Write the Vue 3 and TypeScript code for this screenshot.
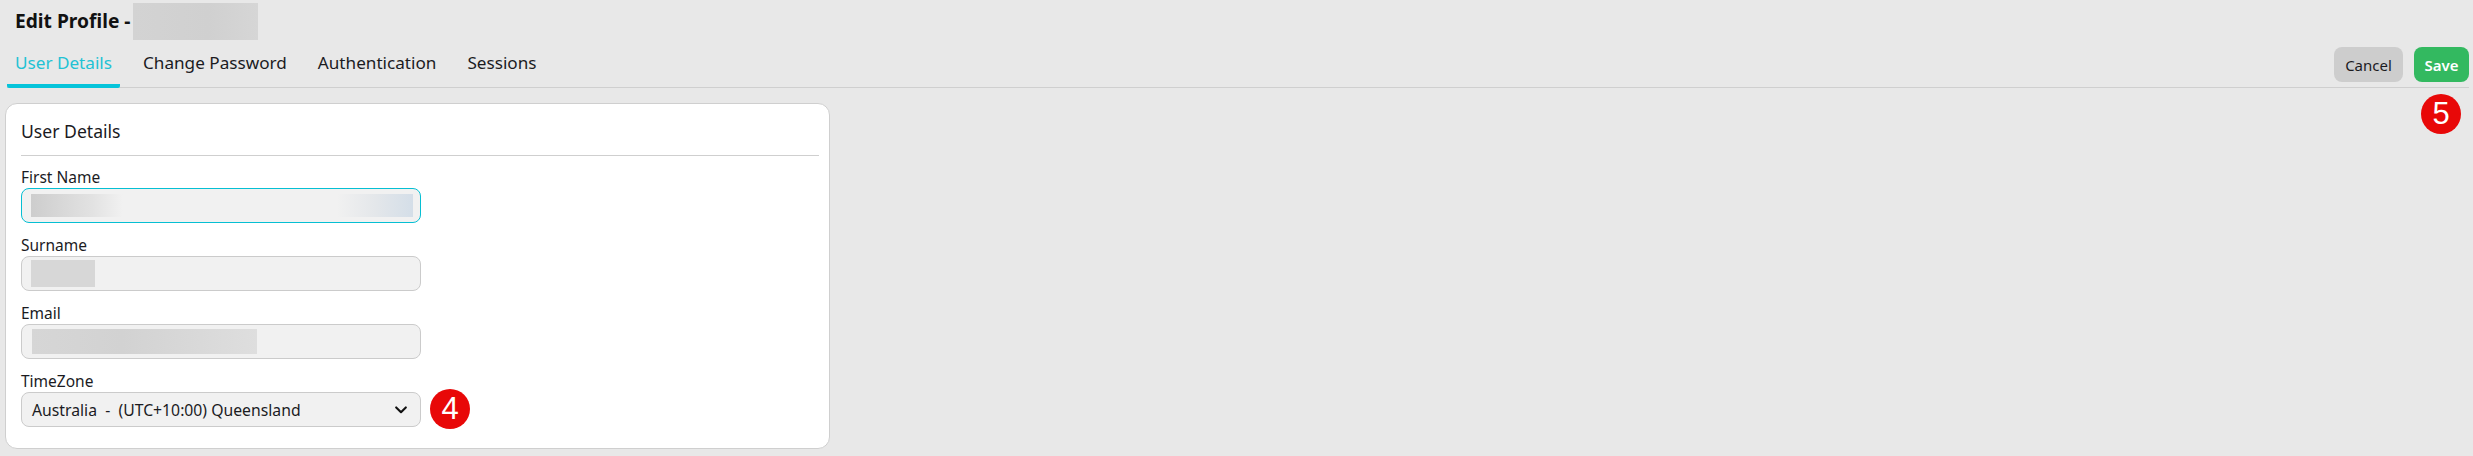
<script setup lang="ts">
const tabs = ['User Details', 'Change Password', 'Authentication', 'Sessions']
const activeTab = 'User Details'
</script>

<template>
  <div class="page">
    <div class="title-row">
      <h1 class="title">Edit Profile -</h1>
      <div class="title-blur" />
    </div>

    <div class="tab-row">
      <div class="tabs">
        <span
          v-for="tab in tabs"
          :key="tab"
          class="tab"
          :class="{ active: tab === activeTab }"
        >{{ tab }}</span>
      </div>
      <div class="actions">
        <button class="btn btn-cancel">Cancel</button>
        <button class="btn btn-save">Save</button>
        <span class="badge badge-save">5</span>
      </div>
    </div>

    <section class="card">
      <h2 class="card-title">User Details</h2>

      <label class="field-label">First Name</label>
      <div class="input focused">
        <div class="blur blur-first" />
      </div>

      <label class="field-label">Surname</label>
      <div class="input">
        <div class="blur blur-surname" />
      </div>

      <label class="field-label">Email</label>
      <div class="input">
        <div class="blur blur-email" />
      </div>

      <label class="field-label">TimeZone</label>
      <div class="input select">
        <span>Australia &nbsp;-&nbsp; (UTC+10:00) Queensland</span>
        <svg class="chevron" viewBox="0 0 12 8" fill="none" xmlns="http://www.w3.org/2000/svg">
          <path d="M1.2 1.4 6 6.2l4.8-4.8" stroke="#111" stroke-width="2.1" stroke-linecap="round" stroke-linejoin="round" />
        </svg>
        <span class="badge badge-zone">4</span>
      </div>
    </section>
  </div>
</template>

<style>
html,
body {
  margin: 0;
  background: #e8e8e8;
}
</style>

<style scoped>
.page {
  height: 456px;
  box-sizing: border-box;
  background: #e8e8e8;
  font-family: "Noto Sans", sans-serif;
  color: #1b1b1f;
  padding: 3px 4px 0 5px;
  overflow: hidden;
}

.title-row {
  display: flex;
  align-items: center;
  gap: 3px;
  height: 37px;
  padding-left: 10px;
}
.title {
  margin: 0 0 3px;
  font-size: 19.2px;
  font-weight: 700;
  color: #111;
  white-space: nowrap;
}
.title-blur {
  width: 125px;
  height: 37px;
  background: linear-gradient(90deg, #d3d3d3, #d0d0d0 60%, #d6d6d6);
}

.tab-row {
  display: flex;
  justify-content: space-between;
  align-items: flex-end;
  height: 47px;
  border-bottom: 1px solid #cfcfcf;
  margin-left: 2px;
}
.tabs {
  display: flex;
  gap: 15px;
}
.tab {
  padding: 0 8px 8px;
  height: 27px;
  line-height: 28px;
  font-size: 17.15px;
  white-space: nowrap;
}
.tab.active {
  color: #22c2d4;
  border-bottom: 4px solid #06c4da;
  border-radius: 0 0 2px 2px;
  margin-bottom: -1px;
}

.actions {
  position: relative;
  display: flex;
  gap: 11px;
  padding-bottom: 5px;
}
.btn {
  height: 35px;
  border: 0;
  border-radius: 8px;
  font-family: inherit;
  font-size: 15px;
  padding: 0;
}
.btn-cancel {
  width: 69px;
  background: #cdcdcd;
  color: #1b1b1f;
}
.btn-save {
  width: 55px;
  background: #33b960;
  color: #fff;
  font-weight: 600;
}

.badge {
  position: absolute;
  width: 40px;
  height: 40px;
  border-radius: 50%;
  background: #e80808;
  color: #fff;
  font-family: "Liberation Sans", Arial, sans-serif;
  font-size: 31px;
  line-height: 40px;
  text-align: center;
}
.badge-save {
  right: 8px;
  top: 47px;
}
.badge-zone {
  left: 408px;
  top: -4px;
}

.card {
  width: 825px;
  height: 346px;
  box-sizing: border-box;
  margin-top: 15px;
  background: #fff;
  border: 1px solid #cfcfcf;
  border-radius: 12px;
  padding: 14px 10px 0 15px;
}
.card-title {
  margin: 0 0 11px;
  height: 26px;
  line-height: 26px;
  font-size: 17.6px;
  font-weight: 400;
}
.card-title::after {
  content: "";
  display: block;
  height: 1px;
  margin-top: 11px;
  background: #cfcfcf;
}

.field-label {
  display: block;
  font-size: 15.5px;
  line-height: 22px;
  height: 22px;
  margin-top: 11px;
}
.card-title + .field-label {
  margin-top: 22px;
}

.input {
  position: relative;
  display: flex;
  align-items: center;
  width: 400px;
  height: 35px;
  box-sizing: border-box;
  background: #f1f1f1;
  border: 1px solid #cbcbcb;
  border-radius: 8px;
  padding-left: 9px;
}
.input.focused {
  border-color: #06bfd3;
}

.blur {
  height: 24px;
}
.blur-first {
  width: 382px;
  height: 23px;
  background: linear-gradient(90deg, #cdcdcd, #e2e2e2 16%, #f1f1f1 24%, #f1f1f1 80%, #e4e7ea 90%, #d4dee8);
}
.blur-surname {
  width: 64px;
  height: 27px;
  background: #d7d7d7;
}
.blur-email {
  width: 225px;
  height: 25px;
  margin-left: 1px;
  background: linear-gradient(90deg, #d6d6d6, #d2d2d2 40%, #dedede);
}

.select {
  justify-content: space-between;
  font-size: 15.75px;
  padding: 0 13px 0 10px;
}
.chevron {
  width: 12px;
  height: 8px;
}
</style>
